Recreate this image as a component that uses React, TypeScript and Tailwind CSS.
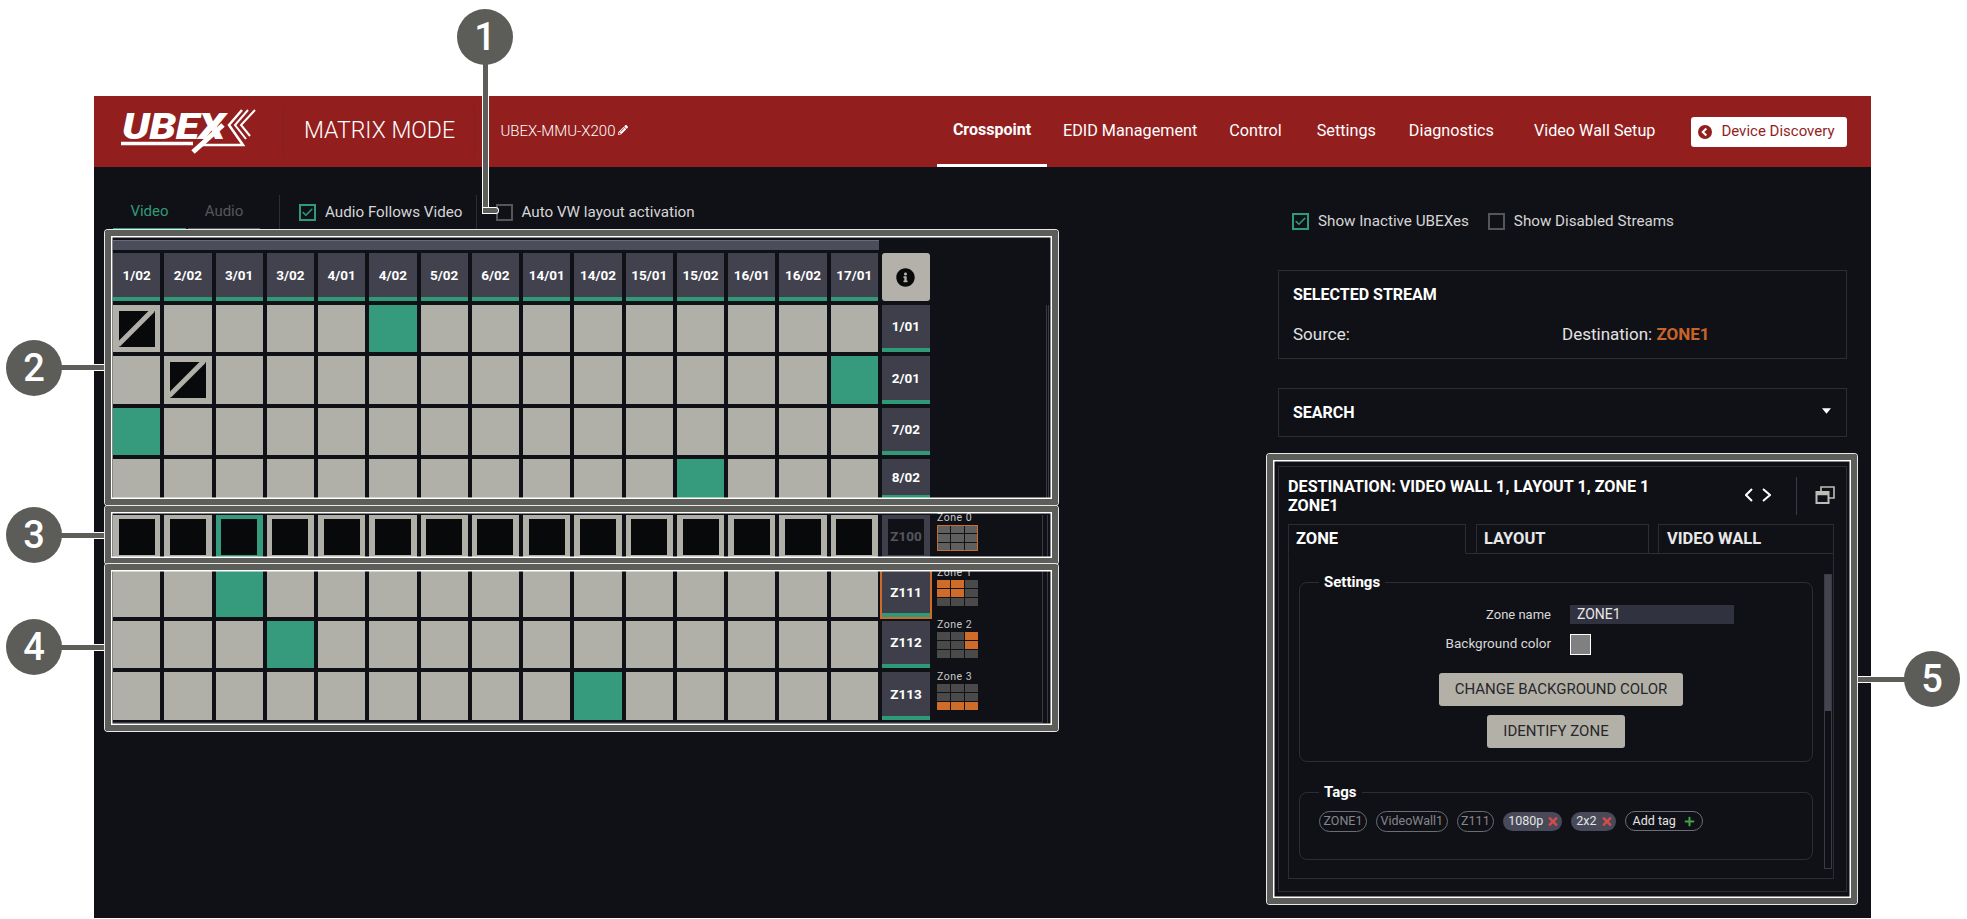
import { Check } from "lucide-react";
import { FaInfoCircle, FaPencilAlt, FaPlus, FaTimes } from "react-icons/fa";

const COLS = ["1/02", "2/02", "3/01", "3/02", "4/01", "4/02", "5/02", "6/02", "14/01", "14/02", "15/01", "15/02", "16/01", "16/02", "17/01"];

function Checkbox({ on, label }: { on?: boolean; label: string }) {
  return (
    <div className="flex items-center">
      <div className={`w-[17px] h-[17px] border-2 flex items-center justify-center ${on ? "border-[#2f9a78]" : "border-[#55565c]"}`}>
        {on && <Check className="w-[13px] h-[13px] text-[#2f9a78]" strokeWidth={3} />}
      </div>
      <span className="ml-[9px] text-[15.2px] text-[#d6d6d6]">{label}</span>
    </div>
  );
}

function Cell({ green, h, kind }: { green?: boolean; h: string; kind?: "cross" | "black" }) {
  return (
    <div className={`w-[47.27px] shrink-0 flex items-center justify-center ${h} ${green ? "bg-[#359b7c]" : "bg-[#b0afa8]"}`}>
      {kind === "black" && <div className="w-[36px] h-[36px] bg-[#08090b]" />}
      {kind === "cross" && (
        <svg viewBox="0 0 36 36" className="w-[36px] h-[36px]">
          <rect width="36" height="36" fill="#08090b" />
          <path d="M-1 34 L34 -1" stroke="#b0afa8" strokeWidth="5" />
        </svg>
      )}
    </div>
  );
}

function Label({ text, h, active }: { text: string; h: string; active?: boolean }) {
  return (
    <div className={`w-[48px] shrink-0 bg-[#3e3f4a] flex flex-col ${h} ${active ? "outline-2 outline-[#cc6b2a]" : ""}`}>
      <div className="flex-1 flex items-center justify-center text-[13.5px] font-bold text-white">{text}</div>
      <div className="h-[4px] bg-[#2f9a78]" />
    </div>
  );
}

function Thumb({ zone, on, frame, top }: { zone: number; on: number[]; frame?: boolean; top: string }) {
  return (
    <div className={`ml-[7px] w-[42px] shrink-0 ${top}`}>
      <div className="text-[10.5px] leading-[12px] tracking-[0.5px] text-[#c9c9c9] whitespace-nowrap">Zone {zone}</div>
      <div className={`mt-[1px] w-[41px] h-[26px] grid grid-cols-3 grid-rows-3 gap-px bg-[#111216] ${frame ? "border border-[#cc6b2a]" : ""}`}>
        {[0, 1, 2, 3, 4, 5, 6, 7, 8].map((i) => (
          <div key={i} className={on.includes(i) ? "bg-[#cf6c2a]" : frame ? "bg-[#5f5f5f]" : "bg-[#4a4a4a]"} />
        ))}
      </div>
    </div>
  );
}

function Row({ h, green, label, cross }: { h: string; green?: number; label: string; cross?: number }) {
  return (
    <div className="flex gap-[4px]">
      {COLS.map((c, i) => (
        <Cell key={c} h={h} green={i === green} kind={i === cross ? "cross" : undefined} />
      ))}
      <Label text={label} h={h} />
    </div>
  );
}

function Chip({ text, filled }: { text: string; filled?: boolean }) {
  if (filled) {
    return (
      <div className="h-[19px] mt-[1px] pl-[5px] pr-[3px] gap-[4px] rounded-full bg-[#484a5a] flex items-center text-[12.5px] text-[#e4e4e4]">
        {text}
        <FaTimes className="w-[12px] h-[13px] text-[#d94a4a]" />
      </div>
    );
  }
  return <div className="h-[21px] px-[3.5px] rounded-full border border-[#6c6d75] flex items-center text-[12.5px] text-[#85858c]">{text}</div>;
}

// annotation frame drawn over the page
function Frame({ className }: { className: string }) {
  return <div className={`absolute rounded-[3px] border-[6px] border-[#5d5d59] shadow-[inset_0_0_0_1.5px_#ffffff,0_0_0_1px_#e8e8e8] pointer-events-none ${className}`} />;
}

function Callout({ n, className }: { n: number; className: string }) {
  return (
    <div className={`absolute w-[56px] h-[56px] rounded-full bg-[#5c5c58] flex items-center justify-center text-white text-[38px] font-medium ${className}`}>
      {n}
    </div>
  );
}

function Wire({ className }: { className: string }) {
  return <div className={`absolute bg-[#5d5d59] shadow-[0_0_0_1px_#ffffff] ${className}`} />;
}

export default function App() {
  return (
    <div className="relative w-[1967px] h-[919px] overflow-hidden bg-white font-[Roboto,sans-serif]">
      <div className="pt-[96px] pl-[94px]">
        <div className="w-[1777px] h-[822px] bg-[#101116] flex flex-col">
          {/* Header */}
          <div className="h-[71px] shrink-0 bg-[#921e1e] flex items-center text-white">
            <div className="w-[190px] h-[51px] border-r border-[#7c2222] pl-[28px] pt-[3px] relative">
              <svg viewBox="0 0 140 50" className="absolute left-[26px] top-[2px] w-[140px] h-[50px]" fill="none" stroke="#ffffff">
                <path d="M122 2 L109 17 L123 37 L82 37" strokeWidth="2.5" />
                <path d="M128 2 L115 17 L126 31" strokeWidth="2" />
                <path d="M135 2 L121 17 L130 28" strokeWidth="2" />
                <path d="M1 35.5 L73 35.5" strokeWidth="3.5" />
                <path d="M73 44 L103 17" strokeWidth="5" />
              </svg>
              <span className="relative inline-block origin-left scale-x-[1.2] text-[36px] leading-[36px] font-black italic tracking-[-0.5px]">UBEX</span>
            </div>
            <div className="w-[190.5px] h-[51px] border-r border-[#7c2222] pl-[20px] flex items-center text-[23px] font-light">MATRIX MODE</div>
            <div className="w-[462.5px] pl-[26px] flex items-center text-[15px] font-light">
              UBEX-MMU-X200
              <FaPencilAlt className="ml-[2px] mb-[4px] w-[10px] h-[10px]" />
            </div>
            <div className="h-full w-[110px] border-b-[3px] border-white flex items-center justify-center text-[16px] font-bold">Crosspoint</div>
            <span className="ml-[16px] text-[16.2px]">EDID Management</span>
            <span className="ml-[32px] text-[16.2px]">Control</span>
            <span className="ml-[35px] text-[16.2px]">Settings</span>
            <span className="ml-[33px] text-[16.2px]">Diagnostics</span>
            <span className="ml-[40px] text-[16.2px]">Video Wall Setup</span>
            <div className="ml-[36px] w-[156px] h-[30px] rounded-[3px] bg-white flex items-center pl-[7px] text-[15px] text-[#921e1e]">
              <svg viewBox="0 0 16 16" className="w-[14px] h-[14px] mr-[9px]">
                <circle cx="8" cy="8" r="8" fill="#921e1e" />
                <path d="M9.5 4 L5.5 8 L9.5 12" stroke="#ffffff" strokeWidth="2.4" fill="none" />
              </svg>
              Device Discovery
            </div>
          </div>

          <div className="flex flex-1">
            {/* Matrix */}
            <div className="w-[1184px] pl-[19px]">
              <div className="mt-[28px] h-[35px] flex items-center">
                <div className="h-full w-[73px] border-b-2 border-[#2f9a78] flex items-center justify-center text-[15px] text-[#2f9a78]">Video</div>
                <div className="ml-[2px] h-full w-[72px] border-b-2 border-[#55565c] flex items-center justify-center text-[15px] text-[#55565c]">Audio</div>
                <div className="ml-[19px] h-full w-px bg-[#2c2d33]" />
                <div className="ml-[19px]"><Checkbox on label="Audio Follows Video" /></div>
                <div className="ml-[13px] h-full w-px bg-[#2c2d33]" />
                <div className="ml-[19px]"><Checkbox label="Auto VW layout activation" /></div>
              </div>

              <div className="mt-[10px] w-[765.5px] h-[10px] bg-[#4b4d5a] border-t border-[#6a6b76]" />

              <div className="mt-[3px] flex gap-[4px]">
                {COLS.map((c) => (
                  <div key={c} className="w-[47.27px] h-[48px] shrink-0 bg-[#41424e] flex flex-col">
                    <div className="flex-1 flex items-center justify-center text-[13.5px] font-bold text-white">{c}</div>
                    <div className="h-[4px] bg-[#2f9a78]" />
                  </div>
                ))}
                <div className="w-[48px] h-[48px] shrink-0 rounded-[3px] bg-[#b3b1aa] flex items-center justify-center">
                  <FaInfoCircle className="w-[19px] h-[19px] text-[#08090b]" />
                </div>
              </div>

              {/* Section 2 */}
              <div className="flex">
                <div className="w-[933px] mt-[4px] flex flex-col gap-[4px]">
                  <Row h="h-[47px]" label="1/01" green={5} cross={0} />
                  <Row h="h-[48px]" label="2/01" green={14} cross={1} />
                  <Row h="h-[47px]" label="7/02" green={0} />
                  <Row h="h-[40px]" label="8/02" green={11} />
                </div>
                <div className="mt-[4px] w-[3px] border-x border-[#3a3b44]" />
              </div>

              {/* Section 3 */}
              <div className="mt-[16px] flex">
                <div className="flex gap-[4px]">
                  {COLS.map((c, i) => (
                    <Cell key={c} h="h-[43px]" green={i === 2} kind="black" />
                  ))}
                  <div className="w-[48px] h-[43px] bg-[#3e3f4a] flex items-center justify-center">
                    <div className="w-[36px] h-[36px] bg-[#101116] flex items-center justify-center text-[13.5px] font-bold text-[#55565e]">Z100</div>
                  </div>
                </div>
                <Thumb zone={0} on={[]} frame top="-mt-[3px]" />
                <div className="ml-[63px] w-px bg-[#3a3b44]" />
                <div className="ml-[4px] w-px bg-[#3a3b44]" />
              </div>

              {/* Section 4 */}
              <div className="mt-[13px] flex">
                <div className="w-[929px] pb-[2px] border-b border-[#3a3b44] flex flex-col gap-[4px]">
                  {[
                    { z: "Z111", zone: 1, green: 2, on: [0, 1, 3, 4], h: "h-[46px]", top: "-mt-[4px]" },
                    { z: "Z112", zone: 2, green: 3, on: [2, 5], h: "h-[47px]", top: "-mt-[2px]" },
                    { z: "Z113", zone: 3, green: 9, on: [6, 7, 8], h: "h-[48px]", top: "-mt-[1px]" },
                  ].map((r) => (
                    <div key={r.z} className="flex">
                      <div className="flex gap-[4px]">
                        {COLS.map((c, i) => (
                          <Cell key={c} h={r.h} green={i === r.green} />
                        ))}
                        <Label text={r.z} h={r.h} active={r.zone === 1} />
                      </div>
                      <Thumb zone={r.zone} on={r.on} top={r.top} />
                    </div>
                  ))}
                </div>
                <div className="w-px bg-[#3a3b44]" />
                <div className="ml-[4px] w-px bg-[#3a3b44]" />
              </div>
            </div>

            {/* Side panel */}
            <div className="w-[569px] text-[#e2e2e2]">
              <div className="mt-[46px] ml-[14px] h-[17px] flex items-center gap-[19px]">
                <Checkbox on label="Show Inactive UBEXes" />
                <Checkbox label="Show Disabled Streams" />
              </div>

              <div className="mt-[40px] h-[89px] border border-[#2c2d33] pl-[14px] pt-[15px]">
                <div className="text-[16px] leading-[17px] font-bold text-white">SELECTED STREAM</div>
                <div className="mt-[21px] flex text-[17px] leading-[20px]">
                  <span className="w-[269px]">Source:</span>
                  <span>
                    Destination: <b className="text-[#c8642a]">ZONE1</b>
                  </span>
                </div>
              </div>

              <div className="mt-[29px] h-[49px] border border-[#2c2d33] pl-[14px] pr-[15px] flex items-center justify-between">
                <span className="text-[16px] font-bold text-white">SEARCH</span>
                <svg viewBox="0 0 10 6" className="w-[9px] h-[6px] mb-[3px]"><path d="M0 0 H10 L5 6 Z" fill="#ffffff" /></svg>
              </div>

              <div className="mt-[29px] h-[426px] border border-[#2c2d33] flex flex-col">
                <div className="pl-[9px] pt-[10px] h-[57px] flex">
                  <div className="w-[457px] text-[16.2px] leading-[19px] font-bold text-white whitespace-nowrap">
                    DESTINATION: VIDEO WALL 1, LAYOUT 1, ZONE 1
                    <br />
                    ZONE1
                  </div>
                  <svg viewBox="0 0 26 14" className="mt-[11px] w-[26px] h-[14px]" fill="none" stroke="#ffffff" strokeWidth="2">
                    <path d="M7 1 L1 7 L7 13" />
                    <path d="M18 1 L25 7 L18 13" />
                  </svg>
                  <div className="ml-[25px] h-[38px] w-px bg-[#3a3b44]" />
                  <svg viewBox="0 0 20 18" className="ml-[18px] mt-[9px] w-[20px] h-[18px]" fill="none" stroke="#bdbdb8">
                    <path d="M6 5 V1 H19 V12 H14" strokeWidth="1.6" />
                    <rect x="1.5" y="6" width="12" height="11" strokeWidth="2" />
                    <path d="M1.5 7.5 H13.5" strokeWidth="3.5" />
                  </svg>
                </div>

                <div className="ml-[9px] mr-[12px] flex flex-col flex-1">
                  <div className="h-[30px] flex border-b border-[#2c2d33] text-[16.5px] font-bold text-[#e8e8e8]">
                    <div className="w-[178px] h-[30px] border border-b-[#101116] border-[#2c2d33] pl-[7px] flex items-center text-white">ZONE</div>
                    <div className="ml-[10px] w-[173px] border border-b-0 border-[#2c2d33] pl-[7px] flex items-center">LAYOUT</div>
                    <div className="ml-[9px] flex-1 border-t border-x border-[#2c2d33] pl-[8px] flex items-center">VIDEO WALL</div>
                  </div>

                  <div className="h-[325px] border-x border-b border-[#2c2d33] pl-[10px] flex">
                    <div className="w-[514px] shrink-0">
                      <fieldset className="mt-[20px] h-[188px] border border-[#2c2d33] rounded-lg">
                        <legend className="ml-[19px] px-[5px] text-[15px] leading-[17px] font-bold text-white">Settings</legend>
                        <div className="mt-[14px] flex items-center">
                          <span className="w-[251px] text-right text-[13px] text-[#d8d8d8]">Zone name</span>
                          <div className="ml-[19px] w-[164px] h-[19px] bg-[#31323f] pl-[7px] flex items-center text-[14px] text-[#e8e8e8]">ZONE1</div>
                        </div>
                        <div className="mt-[9px] flex">
                          <span className="w-[251px] text-right text-[13.5px] leading-[19px] text-[#d8d8d8]">Background color</span>
                          <div className="ml-[19px] w-[21px] h-[21px] bg-[#808080] border border-white" />
                        </div>
                        <div className="mt-[18px] flex flex-col items-center gap-[9px] text-[15px] text-[#26262a]">
                          <div className="ml-[10px] w-[244px] h-[33px] rounded-[3px] bg-[#b3b1a7] flex items-center justify-center">CHANGE BACKGROUND COLOR</div>
                          <div className="w-[138px] h-[33px] rounded-[3px] bg-[#b3b1a7] flex items-center justify-center">IDENTIFY ZONE</div>
                        </div>
                      </fieldset>
                      <fieldset className="mt-[22px] h-[76px] border border-[#2c2d33] rounded-lg">
                        <legend className="ml-[19px] px-[5px] text-[15px] leading-[17px] font-bold text-white">Tags</legend>
                        <div className="mt-[10px] ml-[19px] flex gap-[9px]">
                          <Chip text="ZONE1" />
                          <Chip text="VideoWall1" />
                          <Chip text="Z111" />
                          <Chip text="1080p" filled />
                          <Chip text="2x2" filled />
                          <div className="h-[20px] px-[7px] rounded-full border border-[#6c6d75] flex items-center gap-[8px] text-[12.5px] text-[#e4e4e4]">
                            Add tag
                            <FaPlus className="w-[11px] h-[11px] text-[#3fa34d]" />
                          </div>
                        </div>
                      </fieldset>
                    </div>
                    <div className="ml-[11px] mt-[20px] w-[8px] h-[295px] border border-[#3a3b44]">
                      <div className="h-[136px] bg-[#43444f]" />
                    </div>
                  </div>
                </div>
              </div>
            </div>
          </div>
        </div>
      </div>

      {/* Annotation overlay */}
      <Wire className="left-[483px] top-[64px] w-[5px] h-[148px]" />
      <Wire className="left-[483px] top-[208px] w-[15px] h-[5px] rounded-r-full" />
      <Wire className="left-[60px] top-[365px] w-[46px] h-[5px]" />
      <Wire className="left-[60px] top-[533px] w-[46px] h-[5px]" />
      <Wire className="left-[60px] top-[645px] w-[46px] h-[5px]" />
      <Wire className="left-[1856px] top-[677px] w-[50px] h-[5px]" />
      <Frame className="left-[105px] top-[230px] w-[953px] h-[275px]" />
      <Frame className="left-[105px] top-[506px] w-[953px] h-[58px]" />
      <Frame className="left-[105px] top-[564px] w-[953px] h-[167px]" />
      <Frame className="left-[1267px] top-[454px] w-[590px] h-[450px]" />
      <Callout n={1} className="left-[457px] top-[9px]" />
      <Callout n={2} className="left-[6px] top-[340px]" />
      <Callout n={3} className="left-[6px] top-[507px]" />
      <Callout n={4} className="left-[6px] top-[619px]" />
      <Callout n={5} className="left-[1904px] top-[651px]" />
    </div>
  );
}
